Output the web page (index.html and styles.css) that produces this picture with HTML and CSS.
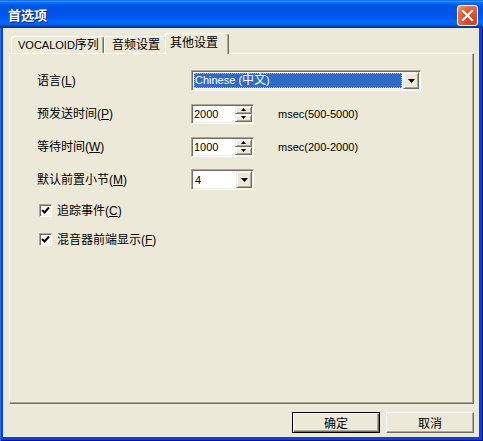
FILE: index.html
```html
<!DOCTYPE html>
<html lang="zh-CN">
<head>
<meta charset="utf-8">
<title>首选项</title>
<link rel="stylesheet" href="styles.css">
</head>
<body>
<div class="window">
  <div class="titlebar">
    <span class="title">首选项</span>
    <button class="close" aria-label="关闭">
      <svg width="13" height="13" viewBox="0 0 13 13"><path d="M2 2 L11 11 M11 2 L2 11" stroke="#fff" stroke-width="2.2" stroke-linecap="square"/></svg>
    </button>
  </div>
  <div class="client">
    <div class="tabs">
      <div class="tab tab-seq"><span class="lat">VOCALOID</span>序列</div>
      <div class="tab tab-audio">音频设置</div>
      <div class="tab tab-other active">其他设置</div>
    </div>
    <div class="panel">
      <div class="form">
        <div class="lbl">语言(<u>L</u>)</div>
        <div class="combo combo-wide">
          <div class="combo-field"><span class="sel"><span class="lat">Chinese (</span>中文<span class="lat">)</span></span></div>
          <div class="raised dd-btn"><svg width="7" height="4" viewBox="0 0 7 4"><path d="M0 0 H7 L3.5 4 Z" fill="#000"/></svg></div>
        </div>

        <div class="lbl">预发送时间(<u>P</u>)</div>
        <div class="spin-edit">
          <div class="edit-text lat">2000</div>
          <div class="spin">
            <div class="raised spin-btn"><svg width="5" height="3" viewBox="0 0 5 3"><path d="M0 3 H5 L2.5 0 Z" fill="#000"/></svg></div>
            <div class="raised spin-btn"><svg width="5" height="3" viewBox="0 0 5 3"><path d="M0 0 H5 L2.5 3 Z" fill="#000"/></svg></div>
          </div>
        </div>
        <div class="unit lat">msec(500-5000)</div>

        <div class="lbl">等待时间(<u>W</u>)</div>
        <div class="spin-edit">
          <div class="edit-text lat">1000</div>
          <div class="spin">
            <div class="raised spin-btn"><svg width="5" height="3" viewBox="0 0 5 3"><path d="M0 3 H5 L2.5 0 Z" fill="#000"/></svg></div>
            <div class="raised spin-btn"><svg width="5" height="3" viewBox="0 0 5 3"><path d="M0 0 H5 L2.5 3 Z" fill="#000"/></svg></div>
          </div>
        </div>
        <div class="unit lat">msec(200-2000)</div>

        <div class="lbl">默认前置小节(<u>M</u>)</div>
        <div class="combo combo-small">
          <div class="combo-field"><span class="plain lat">4</span></div>
          <div class="raised dd-btn"><svg width="7" height="4" viewBox="0 0 7 4"><path d="M0 0 H7 L3.5 4 Z" fill="#000"/></svg></div>
        </div>
      </div>

      <div class="checks">
        <div class="check">
          <span class="box"><svg width="9" height="9" viewBox="0 0 9 9"><path d="M1 4 L3.5 6.5 L8 1.5" stroke="#000" stroke-width="2" fill="none"/></svg></span>
          <span class="check-text">追踪事件(<u>C</u>)</span>
        </div>
        <div class="check">
          <span class="box"><svg width="9" height="9" viewBox="0 0 9 9"><path d="M1 4 L3.5 6.5 L8 1.5" stroke="#000" stroke-width="2" fill="none"/></svg></span>
          <span class="check-text">混音器前端显示(<u>F</u>)</span>
        </div>
      </div>
    </div>
    <div class="buttons">
      <button class="btn default">确定</button>
      <button class="btn">取消</button>
    </div>
  </div>
</div>
</body>
</html>
```
FILE: styles.css
```css
html, body {
  margin: 0;
  padding: 0;
}
body {
  width: 483px;
  height: 441px;
  overflow: hidden;
  font-family: "Liberation Sans", "Noto Sans CJK SC", sans-serif;
  font-size: 12px;
  color: #000;
}
.lat {
  font-family: "Liberation Sans", sans-serif;
  font-size: 11px;
}
u {
  text-decoration: underline;
  text-underline-offset: 1px;
}
.window {
  width: 483px;
  height: 441px;
  box-sizing: border-box;
  display: flex;
  flex-direction: column;
  background: #0842D8;
  box-shadow: inset 1px 0 #2A6BF0, inset -1px 0 #00138C, inset 0 -1px #00138C;
}
.titlebar {
  height: 28px;
  flex: none;
  box-sizing: border-box;
  display: flex;
  align-items: center;
  justify-content: space-between;
  padding: 0 5px 0 8px;
  background: linear-gradient(to bottom, #0058EE 0%, #3593FF 4%, #288EFF 6%, #127DFF 8%, #036FFC 10%, #0262EE 14%, #0057E5 20%, #0054E3 24%, #0055EB 56%, #005BF5 66%, #026AFE 76%, #0062EF 86%, #0052D6 92%, #0040AB 94%, #003092 100%);
}
.title {
  color: #fff;
  font-family: "Noto Sans CJK SC", sans-serif;
  font-weight: bold;
  font-size: 13px;
  line-height: 16px;
  margin-top: 2px;
  text-shadow: 1px 1px #0A1883;
}
.close {
  width: 21px;
  height: 21px;
  margin: 3px 0 0 0;
  padding: 0;
  box-sizing: border-box;
  border: 1px solid #fff;
  border-radius: 3px;
  background: radial-gradient(circle at 70% 75%, #C8401C 0%, #DD5533 45%, #E8734F 75%, #F6A68A 100%);
  display: flex;
  align-items: center;
  justify-content: center;
}
.close svg {
  display: block;
}
.client {
  flex: 1;
  margin: 0 4px 4px 3px;
  background: #ECE9D8;
  display: flex;
  flex-direction: column;
  padding: 5px 5px 4px 6px;
  min-height: 0;
}
.tabs {
  height: 20px;
  flex: none;
  display: flex;
  align-items: flex-end;
  padding-left: 2px;
}
.tab {
  box-sizing: border-box;
  height: 17px;
  border: 1px solid;
  border-color: #fff #716F64 transparent #fff;
  border-bottom: none;
  border-radius: 3px 3px 0 0;
  box-shadow: inset -1px 0 #ACA899;
  background: #ECE9D8;
  display: flex;
  align-items: center;
  line-height: 14px;
  white-space: nowrap;
}
.tab-seq {
  width: 93px;
  padding-left: 6px;
}
.tab-audio {
  width: 63px;
  padding-left: 7px;
}
.tab-other {
  width: 60px;
  padding-left: 4px;
}
.tab.active {
  width: 64px;
  height: 21px;
  margin: 0 -2px -1px -2px;
  position: relative;
  z-index: 1;
  padding-bottom: 2px;
}
.panel {
  flex: none;
  height: 351px;
  box-sizing: border-box;
  border: 1px solid;
  border-color: #fff #716F64 #716F64 #fff;
  box-shadow: inset -1px -1px #ACA899;
  padding: 16px 0 0 27px;
}
.form {
  display: grid;
  grid-template-columns: 154px 63px auto;
  grid-auto-rows: 21px;
  row-gap: 12px;
  align-items: center;
}
.lbl {
  line-height: 14px;
  white-space: nowrap;
}
.sunken {
  border: 1px solid;
}
.combo, .spin-edit {
  box-sizing: border-box;
  display: flex;
  background: #fff;
  border: 1px solid;
  border-color: #ACA899 #fff #fff #ACA899;
  box-shadow: inset 1px 1px #716F64, inset -1px -1px #F1EFE2;
  padding: 1px;
}
.combo {
  height: 21px;
}
.combo-wide {
  grid-column: 2 / span 2;
  width: 230px;
}
.combo-small {
  width: 63px;
}
.combo-field {
  flex: 1;
  display: flex;
  align-items: stretch;
  padding: 1px 1px 1px 1px;
  min-width: 0;
}
.sel {
  flex: 1;
  box-sizing: border-box;
  background: #316AC5;
  color: #fff;
  border: 1px dotted #C9B884;
  display: flex;
  align-items: center;
  padding-left: 0;
  line-height: 13px;
  white-space: nowrap;
}
.plain {
  display: flex;
  align-items: center;
  padding-left: 1px;
}
.raised {
  box-sizing: border-box;
  background: #ECE9D8;
  border: 1px solid;
  border-color: #F1EFE2 #716F64 #716F64 #F1EFE2;
  box-shadow: inset 1px 1px #fff, inset -1px -1px #ACA899;
  display: flex;
  align-items: center;
  justify-content: center;
}
.dd-btn {
  width: 16px;
  flex: none;
}
.dd-btn svg, .spin-btn svg {
  display: block;
}
.spin-edit {
  width: 63px;
  height: 20px;
}
.edit-text {
  flex: 1;
  display: flex;
  align-items: center;
  padding-left: 1px;
}
.spin {
  width: 17px;
  display: flex;
  flex-direction: column;
}
.spin-btn {
  flex: 1;
}
.unit {
  margin-left: 24px;
  white-space: nowrap;
}
.checks {
  display: flex;
  flex-direction: column;
  gap: 16px;
  margin-top: 14px;
  padding-left: 2px;
}
.check {
  display: flex;
  align-items: center;
  height: 13px;
  gap: 5px;
}
.box {
  box-sizing: border-box;
  width: 13px;
  height: 13px;
  flex: none;
  background: #fff;
  border: 1px solid;
  border-color: #ACA899 #fff #fff #ACA899;
  box-shadow: inset 1px 1px #716F64, inset -1px -1px #F1EFE2;
  display: flex;
  align-items: center;
  justify-content: center;
}
.box svg {
  display: block;
}
.check-text {
  line-height: 14px;
  white-space: nowrap;
}
.buttons {
  flex: none;
  display: flex;
  justify-content: flex-end;
  gap: 6px;
  margin-top: 8px;
  height: 21px;
}
.btn {
  box-sizing: border-box;
  width: 88px;
  height: 21px;
  margin: 0;
  padding: 0;
  background: #ECE9D8;
  border: 1px solid;
  border-color: #fff #716F64 #716F64 #fff;
  box-shadow: inset -1px -1px #ACA899;
  font-family: "Noto Sans CJK SC", sans-serif;
  font-size: 12px;
  line-height: 14px;
  color: #000;
  display: flex;
  align-items: center;
  justify-content: center;
}
.btn.default {
  border: 1px solid #000;
  box-shadow: inset 1px 1px #fff, inset -1px -1px #716F64, inset -2px -2px #ACA899;
}
```
